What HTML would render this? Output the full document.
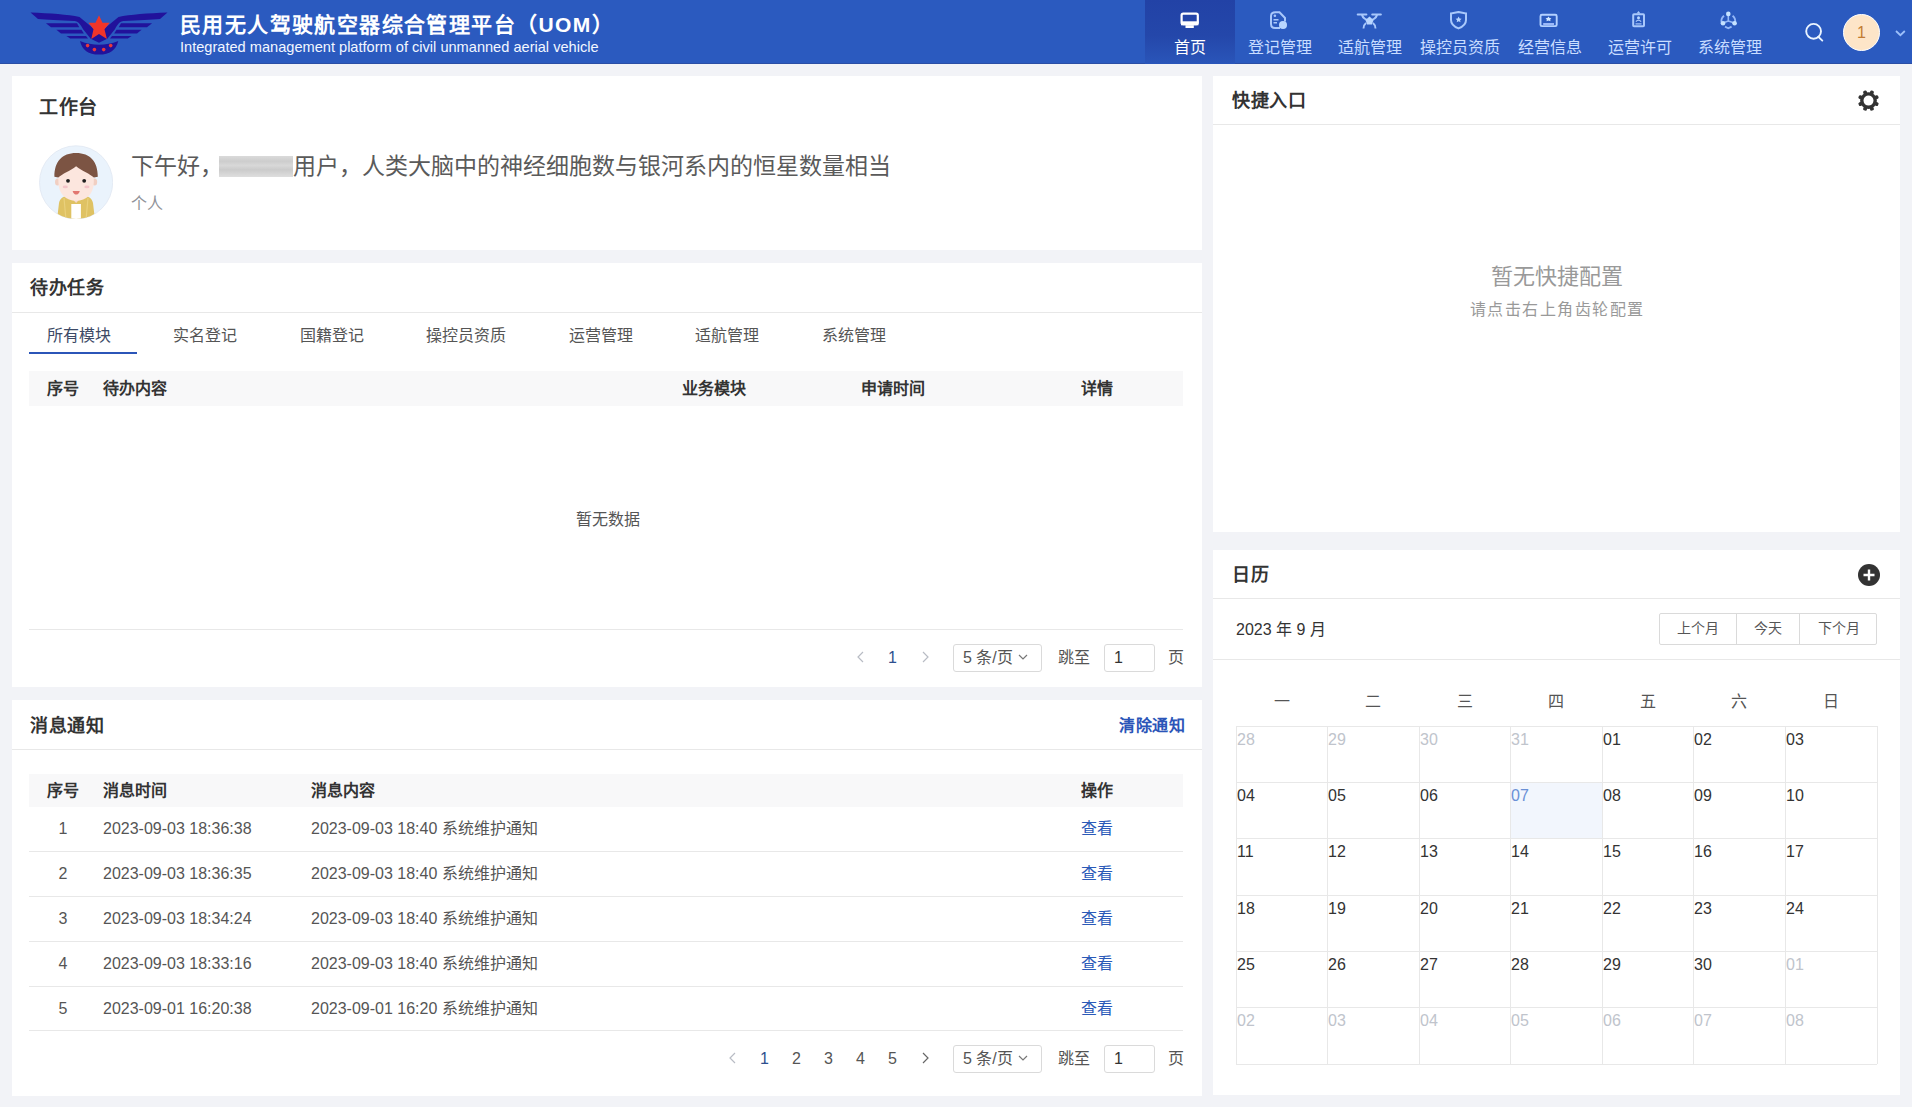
<!DOCTYPE html>
<html lang="zh-CN"><head><meta charset="utf-8">
<style>
*{margin:0;padding:0;box-sizing:border-box}
html,body{width:1912px;height:1107px;overflow:hidden;background:#f2f3f7;font-family:"Liberation Sans",sans-serif;color:#333}
.abs{position:absolute}
#hdr{position:absolute;left:0;top:0;width:1912px;height:64px;background:#2b5abf;border-bottom:1px solid #2b4ea5}
.card{position:absolute;background:#fff}
.ttl{position:absolute;font-size:18px;letter-spacing:0.5px;font-weight:bold;color:#333;line-height:20px;white-space:nowrap}
.hline{position:absolute;height:1px;background:#e8e8e8}
.nav{position:absolute;top:0;width:90px;height:64px;text-align:center;color:#c9ddff}
.nav .t{position:absolute;left:0;right:0;top:37.5px;font-size:16px;line-height:20px;white-space:nowrap}
.tab{position:absolute;top:326px;font-size:16px;line-height:20px;color:#555;white-space:nowrap}
.th{position:absolute;font-size:16px;font-weight:bold;color:#333;line-height:20px;white-space:nowrap}
.td{position:absolute;font-size:16px;color:#555;line-height:20px;white-space:nowrap}
.pg{position:absolute;font-size:16px;line-height:20px;color:#333;white-space:nowrap}
.box{position:absolute;border:1px solid #dadada;border-radius:3px;background:#fff}
.day{position:absolute;font-size:16px;line-height:20px;color:#333}
.day.o{color:#c0c4cc}
</style></head><body>

<!-- HEADER -->
<div id="hdr"></div>
<svg class="abs" style="left:0;top:0" width="180" height="64" viewBox="0 0 180 64">
  <defs><g id="wing">
    <path d="M30.5 12.6 C50 13.4 68 14.6 79.5 17 L99 33 L99 42.8 L90.7 38.7 L83.1 29.3 C80.5 24.5 78.5 21.3 74.4 21 C60 20.2 46 19.5 38 18.9 Z"/>
    <path d="M45.9 23.2 L77 23.2 L79.3 27.3 L51 27.3 Z"/>
    <path d="M56.4 29.7 L81.5 29.7 L83.8 33.4 L61 33.4 Z"/>
    <path d="M66.4 35.9 L86 35.9 L88 38.6 L70.2 38.6 Z"/>
  </g></defs>
  <g fill="#21129b">
    <use href="#wing"/>
    <use href="#wing" transform="translate(198,0) scale(-1,1)"/>
    <path d="M80 41 Q99 48.5 118.3 41 Q115 54.6 99 54.6 Q83 54.6 80 41 Z"/>
  </g>
  <polygon fill="#f0352a" points="99,15.3 102.5,22.8 109.7,22.8 104.5,29.3 106.9,39 99,34 91.3,39 93.5,29.3 88.5,22.8 95.5,22.8"/>
  <g fill="#e8383a">
    <circle cx="87.6" cy="45.6" r="1.8"/><circle cx="94.4" cy="49.6" r="1.8"/><circle cx="103.7" cy="49.6" r="1.8"/><circle cx="110.7" cy="45.6" r="1.8"/>
  </g>
</svg>
<div class="abs" style="left:180px;top:12px;font-size:21px;letter-spacing:1.4px;font-weight:bold;color:#fff;line-height:26px;white-space:nowrap">民用无人驾驶航空器综合管理平台（UOM）</div>
<div class="abs" style="left:180px;top:39px;font-size:14.6px;color:#f2f7ff;line-height:17px;white-space:nowrap">Integrated management platform of civil unmanned aerial vehicle</div>

<div class="abs" style="left:1145px;top:0;width:90px;height:64px;background:linear-gradient(#2242a6 0%,#2447aa 55%,#2a55b9 100%)"></div>
<div class="nav" style="left:1145px;color:#fff"><div class="t">首页</div></div>
<div class="nav" style="left:1235px"><div class="t">登记管理</div></div>
<div class="nav" style="left:1325px"><div class="t">适航管理</div></div>
<div class="nav" style="left:1415px"><div class="t">操控员资质</div></div>
<div class="nav" style="left:1505px"><div class="t">经营信息</div></div>
<div class="nav" style="left:1595px"><div class="t">运营许可</div></div>
<div class="nav" style="left:1685px"><div class="t">系统管理</div></div>
<svg class="abs" style="left:1140px;top:0" width="772" height="64" viewBox="1140 0 772 64">
  <!-- monitor -->
  <rect x="1181.6" y="13.6" width="16.2" height="10.6" rx="1.6" fill="none" stroke="#fff" stroke-width="2.2"/>
  <rect x="1181" y="21.3" width="17.4" height="4" fill="#fff"/>
  <rect x="1185.5" y="25.2" width="8.3" height="2.8" fill="#fff"/>
  <!-- document -->
  <path d="M1275.5 12.2 H1279.5 L1285 18 V21.5 M1280 28 H1275 Q1271 28 1271 24 V16 Q1271 12.2 1275.5 12.2" fill="none" stroke="#a9c8fb" stroke-width="2"/>
  <circle cx="1274.9" cy="15.8" r="1.3" fill="#a9c8fb"/>
  <path d="M1273.5 19.7 H1278.5 M1273.5 22.8 H1277" stroke="#a9c8fb" stroke-width="1.4"/>
  <circle cx="1283" cy="25" r="4" fill="#b9d6ff"/>
  <!-- drone -->
  <path d="M1357.8 14.5 H1366.3 M1372.3 14.5 H1380.8" stroke="#a9c8fb" stroke-width="2.2" stroke-linecap="round"/>
  <path d="M1362 15 Q1363.5 19.5 1369.5 20.5 Q1375.5 19.5 1377 15" fill="none" stroke="#a9c8fb" stroke-width="2.2"/>
  <path d="M1369.5 16.5 L1373.5 20 L1372 24.5 H1367 L1365.5 20 Z" fill="#b9d6ff"/>
  <path d="M1366 23 Q1363.5 25 1363.5 28.5 M1373 23 Q1375.5 25 1375.5 28.5" fill="none" stroke="#a9c8fb" stroke-width="1.9"/>
  <!-- shield -->
  <path d="M1458.5 12 Q1462.5 13 1466 13.4 V20 Q1466 25.5 1458.5 28.4 Q1451 25.5 1451 20 V13.4 Q1454.5 13 1458.5 12 Z" fill="none" stroke="#a9c8fb" stroke-width="2"/>
  <polygon points="1458.6,16.6 1459.6,18.6 1461.6,18.8 1460.1,20.2 1460.5,22.2 1458.6,21.2 1456.7,22.2 1457.1,20.2 1455.6,18.8 1457.6,18.6" fill="#b9d6ff"/>
  <!-- card -->
  <rect x="1540.5" y="14.8" width="16.2" height="11.3" rx="1.4" fill="none" stroke="#b3d0ff" stroke-width="1.9"/>
  <polygon points="1548.5,16.4 1549.6,18 1551.4,18.3 1550.2,19.6 1550.5,21.3 1548.5,20.5 1546.5,21.3 1546.8,19.6 1545.6,18.3 1547.4,18" fill="#d4e8ff"/>
  <path d="M1543.2 24 H1554" stroke="#a9c3ff" stroke-width="1.8"/>
  <!-- license -->
  <rect x="1633.2" y="14.2" width="10.8" height="12" rx="0.8" fill="none" stroke="#a9c8fb" stroke-width="2"/>
  <path d="M1636.5 13.6 L1638.5 11 L1640.5 13.6 Z" fill="#a9c8fb"/>
  <circle cx="1638.5" cy="17.8" r="1.5" fill="#b9d6ff"/>
  <path d="M1635.9 21.6 Q1638.5 18.8 1641.1 21.6" fill="none" stroke="#a9c8fb" stroke-width="1.2"/>
  <path d="M1635.5 23.9 H1641.5" stroke="#a9c8fb" stroke-width="1.2"/>
  <!-- system -->
  <path d="M1724 15.8 A7.2 7.2 0 0 0 1721.5 22.5 M1732.6 15.8 A7.2 7.2 0 0 1 1735.1 22.5 M1725 26.6 L1728.3 28.3 L1731.6 26.6" fill="none" stroke="#95b8f8" stroke-width="1.8"/>
  <path d="M1728.3 14 V21 L1723 23 M1728.3 21 L1734.5 23" fill="none" stroke="#95b8f8" stroke-width="1.6"/>
  <circle cx="1728.3" cy="13.9" r="2.3" fill="#c5e2ff"/>
  <circle cx="1723" cy="23.3" r="2.3" fill="#c5e2ff"/>
  <circle cx="1734.6" cy="23.3" r="2.3" fill="#c5e2ff"/>
  <!-- search -->
  <circle cx="1813.6" cy="31.3" r="7.4" fill="none" stroke="#eaf4ff" stroke-width="1.9"/>
  <path d="M1818.3 36.8 L1822.3 40.6" stroke="#eaf4ff" stroke-width="1.9" stroke-linecap="round"/>
  <!-- chevron -->
  <path d="M1896 31 L1900.4 35.2 L1904.8 31" fill="none" stroke="#9dc0fa" stroke-width="1.8"/>
</svg>
<div class="abs" style="left:1843px;top:13.7px;width:37px;height:37px;border-radius:50%;background:#fde5c8;border:1px solid #fff;color:#c27c33;font-size:16px;line-height:35px;text-align:center">1</div>

<!-- CARD 1 -->
<div class="card" style="left:12px;top:76px;width:1190px;height:174px"></div>
<div class="ttl" style="left:39px;top:97px;font-size:19px;line-height:22px">工作台</div>
<svg class="abs" style="left:39px;top:145px" width="74" height="74" viewBox="39 145 74 74">
  <defs><clipPath id="avc"><circle cx="76.1" cy="182.4" r="36.6"/></clipPath></defs>
  <circle cx="76.1" cy="182.4" r="36.6" fill="#eaf3fc" stroke="#e2e9f3" stroke-width="0.9"/>
  <g clip-path="url(#avc)">
    <ellipse cx="57.6" cy="182" rx="2.6" ry="3.6" fill="#f1cfc2"/><ellipse cx="94.6" cy="182" rx="2.6" ry="3.6" fill="#f1cfc2"/>
    <rect x="71" y="195" width="10" height="8" fill="#f6d8cc"/>
    <path d="M57 220 L59 203 C60 198 64 196 69 195.5 L76.1 203 L83 195.5 C88 196 92 198 93 203 L95 220 Z" fill="#dfc263"/>
    <path d="M64 198 L66 220 M88 198 L86 220" stroke="#e9d07c" stroke-width="1.2"/>
    <rect x="71.3" y="204" width="9.6" height="16" fill="#fff"/>
    <path d="M58.4 165 V182 C58.4 194 66 200.8 76.1 200.8 C86.2 200.8 93.8 194 93.8 182 V165 Z" fill="#fce6de"/>
    <path d="M54.4 176.8 C54.4 161.5 62 153 76.1 153 C90.2 153 97.8 161.5 97.8 176.8 L93.9 177.5 C90 174 82 171 76.1 166.3 C70.2 171 62 174 58.3 177.5 Z" fill="#7c5443"/>
    <circle cx="68" cy="180.8" r="1.9" fill="#1f1f1f"/><circle cx="84.2" cy="180.8" r="1.9" fill="#1f1f1f"/>
    <ellipse cx="65.3" cy="186.9" rx="2.6" ry="1.4" fill="#f4c3c8"/><ellipse cx="86.9" cy="186.9" rx="2.6" ry="1.4" fill="#f4c3c8"/>
    <path d="M72.6 191 L79.8 191 C79 193.6 77.6 194.6 76.2 194.6 C74.8 194.6 73.4 193.6 72.6 191 Z" fill="#e27670"/>
  </g>
</svg>
<div class="abs" style="left:131px;top:151px;font-size:23px;line-height:30px;color:#5a5a5a;white-space:nowrap">下午好，<span style="display:inline-block;margin-left:-4px;width:74px;height:21px;vertical-align:-3px;background:linear-gradient(#dadada,#cdcdcd 25%,#d8d8d8 45%,#cbcbcb 65%,#d6d6d6 85%,#dedede);filter:blur(0.7px)"></span>用户，人类大脑中的神经细胞数与银河系内的恒星数量相当</div>
<div class="abs" style="left:131px;top:194px;font-size:16px;line-height:20px;color:#909399;white-space:nowrap">个人</div>

<!-- CARD 2 -->
<div class="card" style="left:12px;top:263px;width:1190px;height:424px"></div>
<div class="ttl" style="left:30px;top:278px">待办任务</div>
<div class="hline" style="left:12px;top:312px;width:1190px"></div>
<div class="tab" style="left:47px;color:#3d4a66">所有模块</div>
<div class="abs" style="left:29px;top:352px;width:108px;height:2px;background:#2b55b8"></div>
<div class="tab" style="left:173px">实名登记</div>
<div class="tab" style="left:300px">国籍登记</div>
<div class="tab" style="left:426px">操控员资质</div>
<div class="tab" style="left:569px">运营管理</div>
<div class="tab" style="left:695px">适航管理</div>
<div class="tab" style="left:822px">系统管理</div>
<div class="abs" style="left:29px;top:371px;width:1154px;height:35px;background:#f8f8f9"></div>
<div class="th" style="left:47px;top:379px">序号</div>
<div class="th" style="left:103px;top:379px">待办内容</div>
<div class="th" style="left:682px;top:379px">业务模块</div>
<div class="th" style="left:861px;top:379px">申请时间</div>
<div class="th" style="left:1081px;top:379px">详情</div>
<div class="td" style="left:576px;top:510px;color:#555">暂无数据</div>
<div class="hline" style="left:29px;top:629px;width:1154px"></div>
<svg class="abs" style="left:855px;top:651px" width="12" height="12" viewBox="0 0 12 12"><path d="M8 1L3 6l5 5" fill="none" stroke="#b8bcc4" stroke-width="1.2"/></svg>
<div class="pg" style="left:888px;top:648px;color:#2d4f8e">1</div>
<svg class="abs" style="left:919px;top:651px" width="12" height="12" viewBox="0 0 12 12"><path d="M4 1l5 5-5 5" fill="none" stroke="#b8bcc4" stroke-width="1.2"/></svg>
<div class="box" style="left:953px;top:644px;width:89px;height:28px"></div>
<div class="pg" style="left:963px;top:648px;color:#555">5 条/页</div>
<svg class="abs" style="left:1017px;top:652px" width="12" height="10" viewBox="0 0 12 10"><path d="M2 3l4 4 4-4" fill="none" stroke="#777" stroke-width="1.2"/></svg>
<div class="pg" style="left:1058px;top:648px;color:#555">跳至</div>
<div class="box" style="left:1104px;top:644px;width:51px;height:28px"></div>
<div class="pg" style="left:1114px;top:648px;color:#333">1</div>
<div class="pg" style="left:1168px;top:648px;color:#555">页</div>

<!-- CARD 3 -->
<div class="card" style="left:12px;top:700px;width:1190px;height:396px"></div>
<div class="ttl" style="left:30px;top:716px">消息通知</div>
<div class="ttl" style="left:1119px;top:716px;font-size:16px;color:#2b55b8">清除通知</div>
<div class="hline" style="left:12px;top:749px;width:1190px"></div>
<div class="abs" style="left:29px;top:774px;width:1154px;height:33px;background:#f8f8f9"></div>
<div class="th" style="left:47px;top:781px">序号</div>
<div class="th" style="left:103px;top:781px">消息时间</div>
<div class="th" style="left:311px;top:781px">消息内容</div>
<div class="th" style="left:1081px;top:781px">操作</div>
<div class="td" style="left:29px;width:68px;text-align:center;top:819px">1</div><div class="td" style="left:103px;top:819px">2023-09-03 18:36:38</div><div class="td" style="left:311px;top:819px">2023-09-03 18:40 系统维护通知</div><div class="td" style="left:1081px;top:819px;color:#2b5ab8">查看</div><div class="hline" style="left:29px;top:851px;width:1154px"></div>
<div class="td" style="left:29px;width:68px;text-align:center;top:864px">2</div><div class="td" style="left:103px;top:864px">2023-09-03 18:36:35</div><div class="td" style="left:311px;top:864px">2023-09-03 18:40 系统维护通知</div><div class="td" style="left:1081px;top:864px;color:#2b5ab8">查看</div><div class="hline" style="left:29px;top:896px;width:1154px"></div>
<div class="td" style="left:29px;width:68px;text-align:center;top:909px">3</div><div class="td" style="left:103px;top:909px">2023-09-03 18:34:24</div><div class="td" style="left:311px;top:909px">2023-09-03 18:40 系统维护通知</div><div class="td" style="left:1081px;top:909px;color:#2b5ab8">查看</div><div class="hline" style="left:29px;top:941px;width:1154px"></div>
<div class="td" style="left:29px;width:68px;text-align:center;top:954px">4</div><div class="td" style="left:103px;top:954px">2023-09-03 18:33:16</div><div class="td" style="left:311px;top:954px">2023-09-03 18:40 系统维护通知</div><div class="td" style="left:1081px;top:954px;color:#2b5ab8">查看</div><div class="hline" style="left:29px;top:986px;width:1154px"></div>
<div class="td" style="left:29px;width:68px;text-align:center;top:999px">5</div><div class="td" style="left:103px;top:999px">2023-09-01 16:20:38</div><div class="td" style="left:311px;top:999px">2023-09-01 16:20 系统维护通知</div><div class="td" style="left:1081px;top:999px;color:#2b5ab8">查看</div><div class="hline" style="left:29px;top:1030px;width:1154px"></div>

<svg class="abs" style="left:727px;top:1052px" width="12" height="12" viewBox="0 0 12 12"><path d="M8 1L3 6l5 5" fill="none" stroke="#b8bcc4" stroke-width="1.2"/></svg>
<div class="pg" style="left:760px;top:1049px;color:#2d4f8e">1</div>
<div class="pg" style="left:792px;top:1049px;color:#555">2</div>
<div class="pg" style="left:824px;top:1049px;color:#555">3</div>
<div class="pg" style="left:856px;top:1049px;color:#555">4</div>
<div class="pg" style="left:888px;top:1049px;color:#555">5</div>
<svg class="abs" style="left:919px;top:1052px" width="12" height="12" viewBox="0 0 12 12"><path d="M4 1l5 5-5 5" fill="none" stroke="#666" stroke-width="1.2"/></svg>
<div class="box" style="left:953px;top:1045px;width:89px;height:28px"></div>
<div class="pg" style="left:963px;top:1049px;color:#555">5 条/页</div>
<svg class="abs" style="left:1017px;top:1053px" width="12" height="10" viewBox="0 0 12 10"><path d="M2 3l4 4 4-4" fill="none" stroke="#777" stroke-width="1.2"/></svg>
<div class="pg" style="left:1058px;top:1049px;color:#555">跳至</div>
<div class="box" style="left:1104px;top:1045px;width:51px;height:28px"></div>
<div class="pg" style="left:1114px;top:1049px;color:#333">1</div>
<div class="pg" style="left:1168px;top:1049px;color:#555">页</div>

<!-- RIGHT CARD 1 -->
<div class="card" style="left:1213px;top:76px;width:687px;height:456px"></div>
<div class="ttl" style="left:1232px;top:91px">快捷入口</div>
<svg class="abs" style="left:1855px;top:88px" width="27" height="26" viewBox="-13.5 -12.6 27 26"><g fill="#333"><rect x="-1.9" y="-10.6" width="3.8" height="5" rx="1.3" transform="rotate(22.5)"/><rect x="-1.9" y="-10.6" width="3.8" height="5" rx="1.3" transform="rotate(67.5)"/><rect x="-1.9" y="-10.6" width="3.8" height="5" rx="1.3" transform="rotate(112.5)"/><rect x="-1.9" y="-10.6" width="3.8" height="5" rx="1.3" transform="rotate(157.5)"/><rect x="-1.9" y="-10.6" width="3.8" height="5" rx="1.3" transform="rotate(202.5)"/><rect x="-1.9" y="-10.6" width="3.8" height="5" rx="1.3" transform="rotate(247.5)"/><rect x="-1.9" y="-10.6" width="3.8" height="5" rx="1.3" transform="rotate(292.5)"/><rect x="-1.9" y="-10.6" width="3.8" height="5" rx="1.3" transform="rotate(337.5)"/></g><circle r="6.7" fill="none" stroke="#333" stroke-width="3.4"/></svg>
<div class="hline" style="left:1213px;top:124px;width:687px"></div>
<div class="abs" style="left:1213px;top:263px;width:687px;text-align:center;font-size:22px;line-height:28px;color:#999">暂无快捷配置</div>
<div class="abs" style="left:1213px;top:300px;width:687px;text-align:center;font-size:16px;line-height:20px;letter-spacing:1.5px;text-indent:1.5px;color:#999">请点击右上角齿轮配置</div>

<!-- RIGHT CARD 2 -->
<div class="card" style="left:1213px;top:550px;width:687px;height:545px"></div>
<div class="ttl" style="left:1232px;top:565px">日历</div>
<svg class="abs" style="left:1858px;top:564px" width="22" height="22" viewBox="0 0 22 22"><circle cx="11" cy="11" r="11" fill="#333"/><path d="M11 5.5v11M5.5 11h11" stroke="#fff" stroke-width="2.4"/></svg>
<div class="hline" style="left:1213px;top:598px;width:687px"></div>
<div class="abs" style="left:1236px;top:620px;font-size:16px;line-height:20px;color:#333;white-space:nowrap">2023 年 9 月</div>
<div class="box" style="left:1659px;top:613px;width:218px;height:32px;border-radius:2px"></div>
<div class="abs" style="left:1736px;top:614px;width:1px;height:30px;background:#dadada"></div>
<div class="abs" style="left:1799px;top:614px;width:1px;height:30px;background:#dadada"></div>
<div class="abs" style="left:1659px;top:619px;width:77px;text-align:center;font-size:14px;line-height:18px;color:#555">上个月</div>
<div class="abs" style="left:1737px;top:619px;width:62px;text-align:center;font-size:14px;line-height:18px;color:#555">今天</div>
<div class="abs" style="left:1800px;top:619px;width:77px;text-align:center;font-size:14px;line-height:18px;color:#555">下个月</div>
<div class="hline" style="left:1213px;top:659px;width:687px"></div>
<div class="abs" style="left:1510px;top:782px;width:92px;height:56px;background:#f2f6fd"></div><div class="day o" style="left:1237px;top:730px">28</div><div class="day o" style="left:1328px;top:730px">29</div><div class="day o" style="left:1420px;top:730px">30</div><div class="day o" style="left:1511px;top:730px">31</div><div class="day" style="left:1603px;top:730px">01</div><div class="day" style="left:1694px;top:730px">02</div><div class="day" style="left:1786px;top:730px">03</div><div class="day" style="left:1237px;top:786px">04</div><div class="day" style="left:1328px;top:786px">05</div><div class="day" style="left:1420px;top:786px">06</div><div class="day" style="left:1511px;top:786px;color:#6a90d6">07</div><div class="day" style="left:1603px;top:786px">08</div><div class="day" style="left:1694px;top:786px">09</div><div class="day" style="left:1786px;top:786px">10</div><div class="day" style="left:1237px;top:842px">11</div><div class="day" style="left:1328px;top:842px">12</div><div class="day" style="left:1420px;top:842px">13</div><div class="day" style="left:1511px;top:842px">14</div><div class="day" style="left:1603px;top:842px">15</div><div class="day" style="left:1694px;top:842px">16</div><div class="day" style="left:1786px;top:842px">17</div><div class="day" style="left:1237px;top:899px">18</div><div class="day" style="left:1328px;top:899px">19</div><div class="day" style="left:1420px;top:899px">20</div><div class="day" style="left:1511px;top:899px">21</div><div class="day" style="left:1603px;top:899px">22</div><div class="day" style="left:1694px;top:899px">23</div><div class="day" style="left:1786px;top:899px">24</div><div class="day" style="left:1237px;top:955px">25</div><div class="day" style="left:1328px;top:955px">26</div><div class="day" style="left:1420px;top:955px">27</div><div class="day" style="left:1511px;top:955px">28</div><div class="day" style="left:1603px;top:955px">29</div><div class="day" style="left:1694px;top:955px">30</div><div class="day o" style="left:1786px;top:955px">01</div><div class="day o" style="left:1237px;top:1011px">02</div><div class="day o" style="left:1328px;top:1011px">03</div><div class="day o" style="left:1420px;top:1011px">04</div><div class="day o" style="left:1511px;top:1011px">05</div><div class="day o" style="left:1603px;top:1011px">06</div><div class="day o" style="left:1694px;top:1011px">07</div><div class="day o" style="left:1786px;top:1011px">08</div><div class="abs" style="left:1236px;top:726px;width:1px;height:338px;background:#e8e8e8"></div><div class="abs" style="left:1327px;top:726px;width:1px;height:338px;background:#e8e8e8"></div><div class="abs" style="left:1419px;top:726px;width:1px;height:338px;background:#e8e8e8"></div><div class="abs" style="left:1510px;top:726px;width:1px;height:338px;background:#e8e8e8"></div><div class="abs" style="left:1602px;top:726px;width:1px;height:338px;background:#e8e8e8"></div><div class="abs" style="left:1693px;top:726px;width:1px;height:338px;background:#e8e8e8"></div><div class="abs" style="left:1785px;top:726px;width:1px;height:338px;background:#e8e8e8"></div><div class="abs" style="left:1877px;top:726px;width:1px;height:338px;background:#e8e8e8"></div><div class="abs" style="left:1236px;top:726px;width:641px;height:1px;background:#e8e8e8"></div><div class="abs" style="left:1236px;top:782px;width:641px;height:1px;background:#e8e8e8"></div><div class="abs" style="left:1236px;top:838px;width:641px;height:1px;background:#e8e8e8"></div><div class="abs" style="left:1236px;top:895px;width:641px;height:1px;background:#e8e8e8"></div><div class="abs" style="left:1236px;top:951px;width:641px;height:1px;background:#e8e8e8"></div><div class="abs" style="left:1236px;top:1007px;width:641px;height:1px;background:#e8e8e8"></div><div class="abs" style="left:1236px;top:1064px;width:641px;height:1px;background:#e8e8e8"></div><div class="day" style="left:1236px;width:91px;text-align:center;top:692px;color:#555">一</div><div class="day" style="left:1327px;width:92px;text-align:center;top:692px;color:#555">二</div><div class="day" style="left:1419px;width:91px;text-align:center;top:692px;color:#555">三</div><div class="day" style="left:1510px;width:92px;text-align:center;top:692px;color:#555">四</div><div class="day" style="left:1602px;width:91px;text-align:center;top:692px;color:#555">五</div><div class="day" style="left:1693px;width:92px;text-align:center;top:692px;color:#555">六</div><div class="day" style="left:1785px;width:92px;text-align:center;top:692px;color:#555">日</div>
</body></html>
